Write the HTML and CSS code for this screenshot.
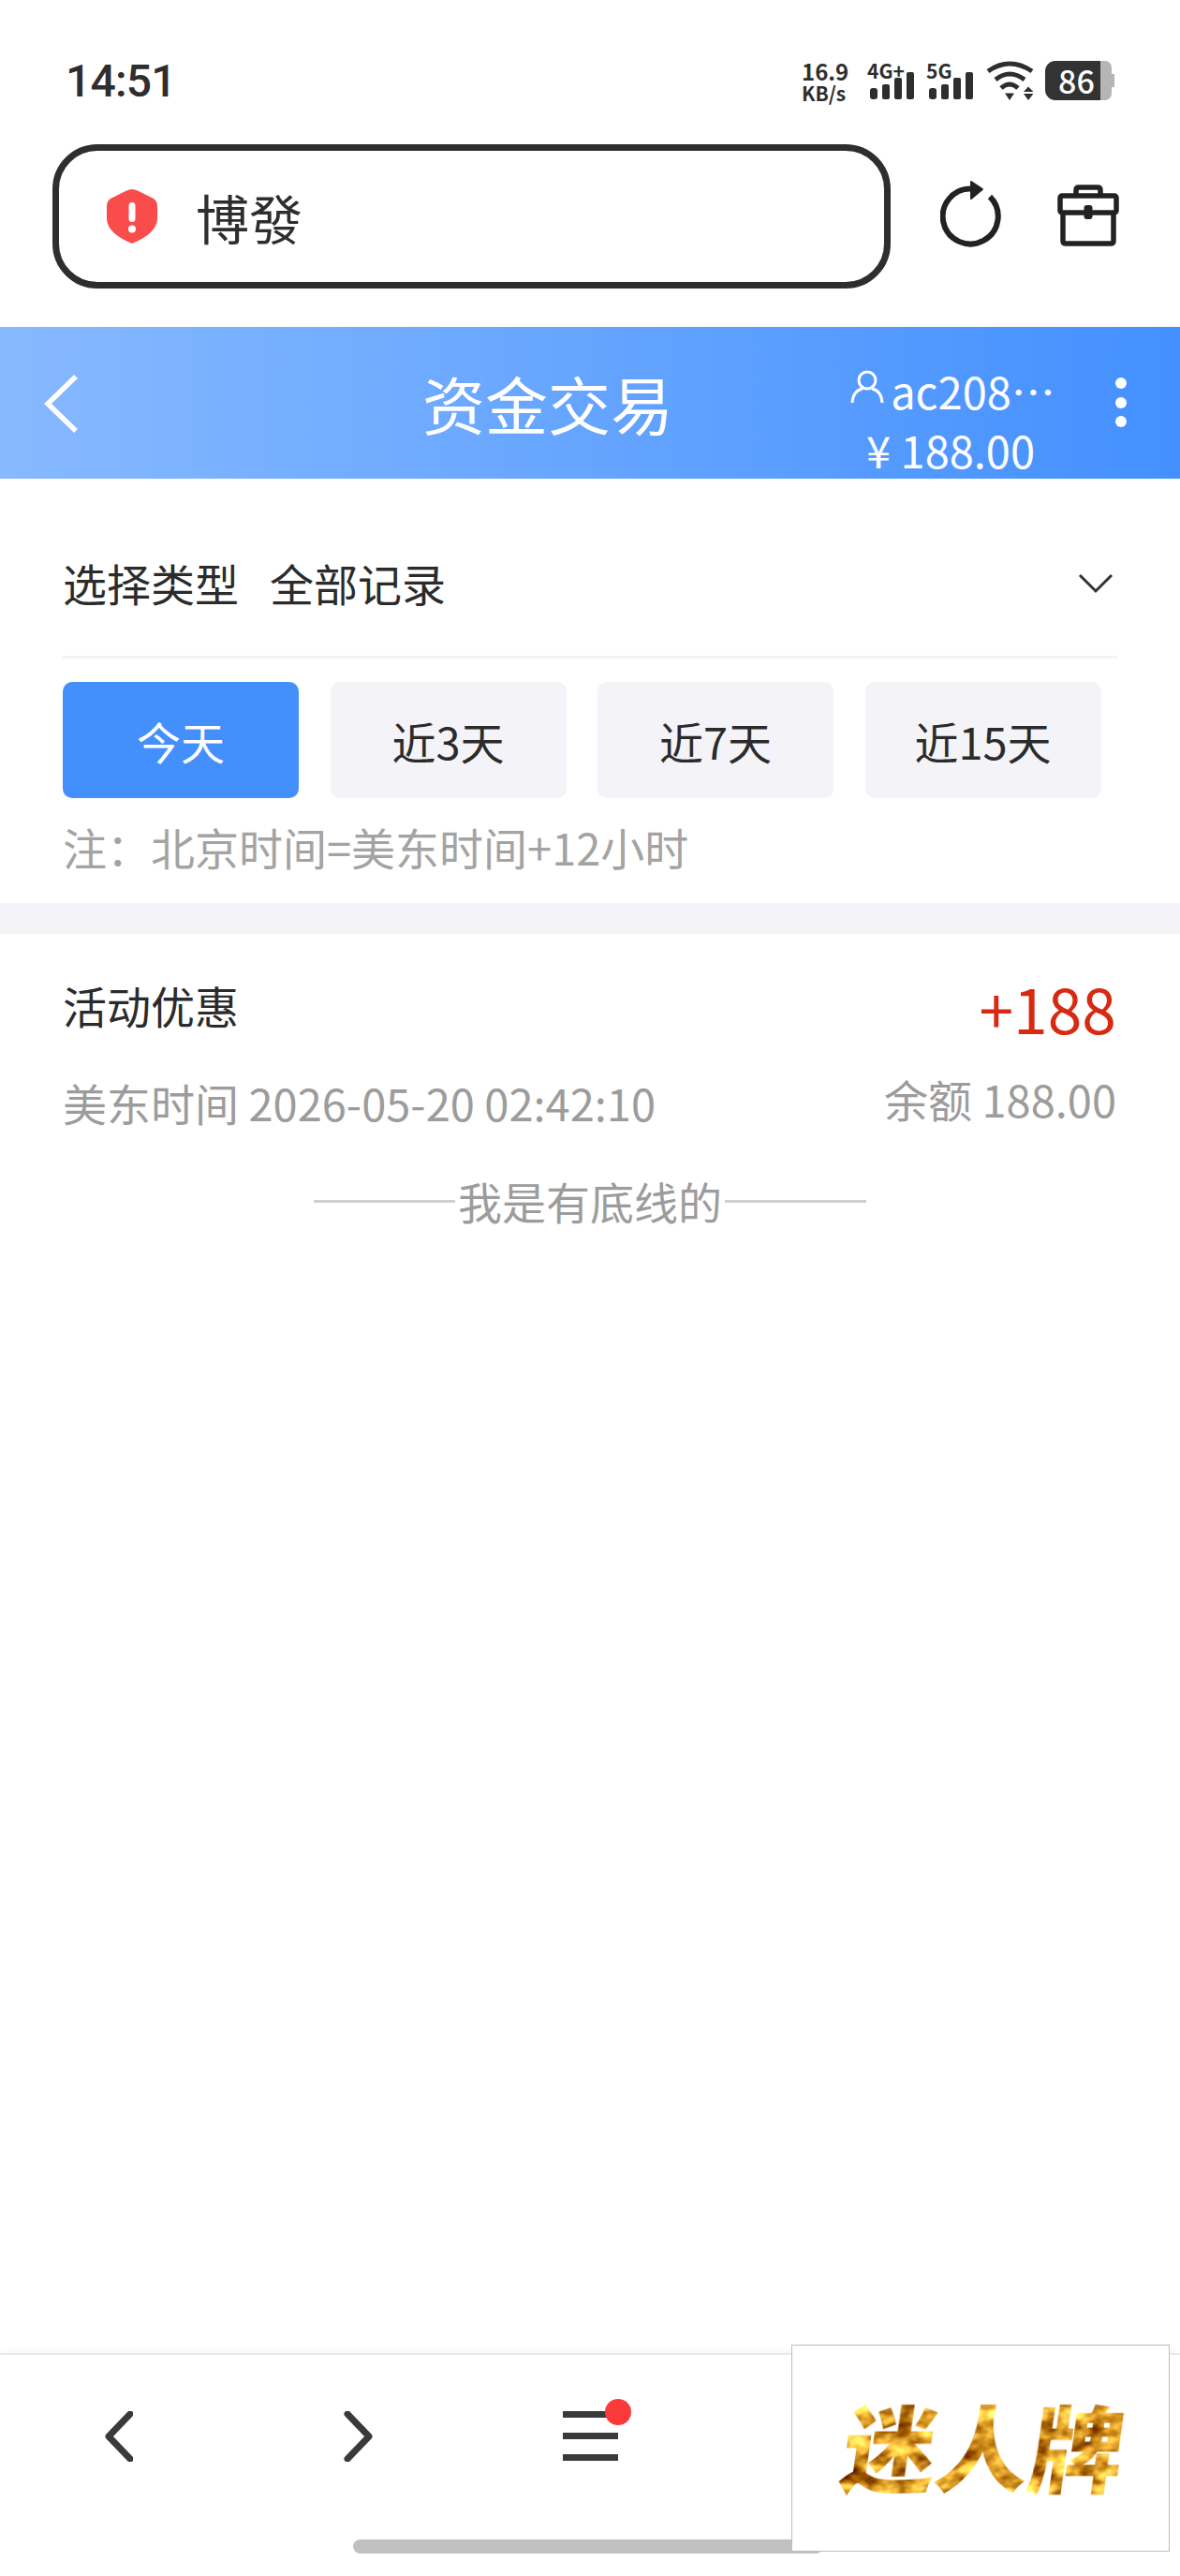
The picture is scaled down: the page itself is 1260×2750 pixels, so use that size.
FILE: index.html
```html
<!DOCTYPE html>
<html lang="zh-CN">
<head>
    <meta charset="UTF-8">
    <meta name="viewport" content="width=device-width, initial-scale=1.0">
    <title>资金交易</title>
    <link rel="stylesheet" href="styles.css">
</head>
<body>
    <div class="page">
        <!-- phone status bar -->
        <div class="statusbar">
            <span class="clock">14:51</span>
            <div class="status-icons">
                <div class="speed"><span class="speed-num">16.9</span><span class="speed-unit">KB/s</span></div>
                <div class="signal signal-4g">
                    <span class="net">4G+</span>
                    <svg width="50" height="30" viewBox="0 0 50 30"><g fill="#2e2e2e"><rect x="2" y="17" width="8" height="12" rx="3"/><rect x="15" y="13" width="8" height="16" rx="2"/><rect x="28" y="6" width="8" height="23" rx="2"/><rect x="41" y="0" width="8" height="29" rx="2"/></g></svg>
                </div>
                <div class="signal signal-5g">
                    <span class="net">5G</span>
                    <svg width="50" height="30" viewBox="0 0 50 30"><g fill="#2e2e2e"><rect x="2" y="17" width="8" height="12" rx="3"/><rect x="15" y="13" width="8" height="16" rx="2"/><rect x="28" y="6" width="8" height="23" rx="2"/><rect x="41" y="0" width="8" height="29" rx="2"/></g></svg>
                </div>
                <svg class="wifi" width="52" height="42" viewBox="0 0 52 42">
                    <g fill="none" stroke="#2e2e2e" stroke-width="5">
                        <path d="M2 11Q25-5 49 11"/>
                        <path d="M10 20Q25 8 41 20"/>
                        <path d="M16 29Q25 21 34 29"/>
                    </g>
                    <path d="M20 34.500H30L25 42Z M40 33L45 27.500L50.500 33Z M40 35H50.500L45 42Z" fill="#2e2e2e"/>
                </svg>
                <div class="battery">
                    <span class="battery-level">86</span>
                    <span class="battery-rest"></span>
                    <span class="battery-cap"></span>
                </div>
            </div>
        </div>

        <!-- browser address row -->
        <div class="addr-row">
            <div class="addr-box">
                <svg class="shield" width="54" height="58" viewBox="0 0 54 58">
                    <path d="M27 0Q31 0 35 2.500L49 9.500Q54 12 54 18V31Q54 47 27 58Q0 47 0 31V18Q0 12 5 9.500L19 2.500Q23 0 27 0Z" fill="#fb4c4c"/>
                    <rect x="23.500" y="14" width="7" height="21" rx="3.500" fill="#fff"/>
                    <circle cx="27" cy="42.500" r="4" fill="#fff"/>
                </svg>
                <span class="addr-text">博發</span>
            </div>
            <svg class="reload" width="66" height="72" viewBox="0 0 66 72">
                <path d="M53 17A29.500 29.500 0 1 1 34 8.500" fill="none" stroke="#222" stroke-width="6"/>
                <path d="M33 1L45 9L33 19Z" fill="#222" stroke="#222" stroke-width="2" stroke-linejoin="round"/>
            </svg>
            <svg class="toolbox" width="66" height="66" viewBox="0 0 66 66">
                <g fill="none" stroke="#222" stroke-width="5.500" stroke-linejoin="round">
                    <path d="M20 12V6Q20 3 23 3H43Q46 3 46 6V12"/>
                    <rect x="3" y="12" width="60" height="18" rx="2"/>
                    <path d="M6 30V60Q6 63 9 63H57Q60 63 60 60V30"/>
                </g>
                <rect x="28.500" y="22" width="9" height="15" rx="3" fill="#222"/>
            </svg>
        </div>

        <!-- app header -->
        <header class="app-header">
            <svg class="back" width="36" height="62" viewBox="0 0 36 62"><path d="M34 2L4 31L34 60" fill="none" stroke="#fff" stroke-width="5.500"/></svg>
            <h1 class="title">资金交易</h1>
            <div class="account">
                <div class="account-name">
                    <svg width="36" height="36" viewBox="0 0 36 36"><g fill="none" stroke="#fff" stroke-width="3"><circle cx="18" cy="11" r="9"/><path d="M2 35Q3 22 13 20M34 35Q33 22 23 20"/></g></svg>
                    <span>ac208…</span>
                </div>
                <div class="account-money">¥ 188.00</div>
            </div>
            <div class="more"><i></i><i></i><i></i></div>
        </header>

        <main class="content">
            <div class="filter">
                <div class="select-row">
                    <span class="select-label">选择类型</span>
                    <span class="select-value">全部记录</span>
                    <svg class="select-arrow" width="38" height="22" viewBox="0 0 38 22"><path d="M2 2L19 19L36 2" fill="none" stroke="#333" stroke-width="3"/></svg>
                </div>
                <div class="days">
                    <button class="day active">今天</button>
                    <button class="day">近3天</button>
                    <button class="day">近7天</button>
                    <button class="day">近15天</button>
                </div>
                <p class="note">注：北京时间=美东时间+12小时</p>
            </div>

            <div class="band"></div>

            <div class="record">
                <div class="record-top">
                    <span class="record-name">活动优惠</span>
                    <span class="record-amount">+188</span>
                </div>
                <div class="record-bottom">
                    <span class="record-time">美东时间 2026-05-20 02:42:10</span>
                    <span class="record-balance">余额 188.00</span>
                </div>
            </div>

            <div class="the-end"><i></i><span>我是有底线的</span><i></i></div>
        </main>

        <!-- browser bottom bar -->
        <footer class="bottom-bar">
            <div class="nav-item">
                <svg width="32" height="54" viewBox="0 0 32 54"><path d="M28 3L5 27L28 51" fill="none" stroke="#3a3a3a" stroke-width="7" stroke-linejoin="round" stroke-linecap="round" transform="translate(1 0)"/></svg>
            </div>
            <div class="nav-item nav-forward">
                <svg width="32" height="54" viewBox="0 0 32 54"><path d="M4 3L27 27L4 51" fill="none" stroke="#3a3a3a" stroke-width="7" stroke-linejoin="round" stroke-linecap="round"/></svg>
            </div>
            <div class="nav-item">
                <div class="menu"><i></i><i></i><i></i><b class="menu-dot"></b></div>
            </div>
            <div class="home-pill"></div>
            <div class="float-ad">
                <svg width="404" height="220" viewBox="0 0 404 220">
                    <defs>
                        <filter id="gold" x="0" y="0" width="100%" height="100%" color-interpolation-filters="sRGB">
                            <feTurbulence type="fractalNoise" baseFrequency="0.04 0.06" numOctaves="3" seed="7" result="noise"/>
                            <feColorMatrix in="noise" type="matrix" values="1.4 0 0 0 0.15  1.5 0 0 0 -0.15  1 0 0 0 -0.35  0 0 0 0 1" result="tone"/>
                            <feComposite in="tone" in2="SourceAlpha" operator="in"/>
                        </filter>
                    </defs>
                    <text class="ad-text" x="0" y="0" transform="translate(50 150) skewX(-8)" filter="url(#gold)">迷人牌</text>
                </svg>
            </div>
        </footer>
    </div>
</body>
</html>
```

FILE: styles.css
```css
* {
    box-sizing: border-box;
}
body {
    margin: 0;
    background: #fff;
    font-family: "Noto Sans CJK SC", "Noto Sans", sans-serif;
    color: #333;
}
.page {
    width: 1260px;
    height: 2750px;
    display: flex;
    flex-direction: column;
    overflow: hidden;
}

/* status bar */
.statusbar {
    height: 154px;
    flex: none;
    padding: 65px 70px 0 70px;
    display: flex;
    justify-content: space-between;
    align-items: flex-start;
}
.clock {
    font-family: Roboto, sans-serif;
    font-weight: 500;
    font-size: 48px;
    line-height: 44px;
    letter-spacing: -0.8px;
    color: #2e2e2e;
}
.status-icons {
    display: flex;
    align-items: flex-start;
    height: 42px;
}
.speed {
    width: 58px;
    margin-top: -2px;
    display: flex;
    flex-direction: column;
    font-weight: 700;
    color: #2e2e2e;
}
.speed-num {
    font-size: 24px;
    line-height: 25px;
}
.speed-unit {
    font-size: 21px;
    line-height: 22px;
}
.signal {
    width: 63px;
    position: relative;
    height: 42px;
    display: flex;
    flex-direction: column;
    align-items: flex-end;
    justify-content: flex-end;
}
.signal .net {
    position: absolute;
    left: 12px;
    top: 0;
    font-weight: 700;
    font-size: 21px;
    line-height: 20px;
    color: #2e2e2e;
}
.signal-5g {
    margin-right: 13px;
}
.wifi {
    flex: none;
    margin-right: 11px;
}
.battery {
    display: flex;
    height: 42px;
    align-items: center;
}
.battery-level {
    width: 59px;
    height: 42px;
    padding-left: 8px;
    background: #333;
    border-radius: 11px 0 0 11px;
    color: #fff;
    font-size: 34px;
    font-weight: 500;
    line-height: 42px;
    text-align: center;
}
.battery-rest {
    width: 12px;
    height: 42px;
    background: #b5b5b5;
    border-radius: 0 7px 7px 0;
}
.battery-cap {
    width: 3px;
    height: 14px;
    background: #b5b5b5;
}

/* address row */
.addr-row {
    height: 195px;
    flex: none;
    padding-left: 56px;
    display: flex;
    align-items: flex-start;
}
.addr-box {
    width: 895px;
    height: 154px;
    border: 7px solid #2e2e2e;
    border-radius: 48px;
    display: flex;
    align-items: center;
    padding-left: 51px;
}
.addr-text {
    margin-left: 41px;
    font-size: 57px;
    line-height: 66px;
    color: #2e2e2e;
}
.reload {
    margin-left: 53px;
    margin-top: 39px;
}
.toolbox {
    margin-left: 59px;
    margin-top: 43px;
}

/* app header */
.app-header {
    height: 162px;
    flex: none;
    display: flex;
    align-items: flex-start;
    background: linear-gradient(90deg, #87b9ff 0%, #4390ff 100%);
    color: #fff;
}
.back {
    flex: none;
    margin: 51px 0 0 47px;
}
.title {
    margin: 36px 0 0 368px;
    font-size: 67px;
    font-weight: 400;
    line-height: 90px;
    white-space: nowrap;
}
.account {
    flex: none;
    width: 270px;
    margin: 36px 0 0 161px;
    text-align: center;
    font-size: 47px;
    line-height: 63px;
}
.account-name {
    display: flex;
    align-items: flex-start;
    justify-content: center;
    gap: 7px;
    padding-left: 5px;
}
.account-name svg {
    flex: none;
    margin-top: 10px;
}
.more {
    flex: none;
    margin: 54px 0 0 41px;
    display: flex;
    flex-direction: column;
    gap: 8.500px;
}
.more i {
    display: block;
    width: 12px;
    height: 12px;
    border-radius: 50%;
    background: #fff;
}

/* filter */
.content {
    flex: 1;
}
.filter {
    padding: 0 67px 27px;
}
.select-row {
    display: flex;
    align-items: center;
    height: 192px;
    padding-top: 31px;
    border-bottom: 3px solid #f4f4f7;
    font-size: 47px;
    color: #2b2b2b;
}
.select-value {
    margin-left: 33px;
}
.select-arrow {
    margin-left: auto;
    margin-right: 4px;
    margin-top: 4px;
}
.days {
    display: flex;
    gap: 33.500px;
    margin-top: 25px;
}
.day {
    width: 252px;
    height: 124px;
    border: none;
    border-radius: 10px;
    background: #f4f4f8;
    color: #2b2b2b;
    font-family: inherit;
    font-size: 47px;
    padding: 0;
}
.day.active {
    background: #4390fd;
    color: #fff;
}
.note {
    margin: 19px 0 0;
    font-size: 47px;
    line-height: 66px;
    color: #a3a3a3;
}
.band {
    height: 33px;
    background: #f4f4f8;
}

/* record */
.record {
    padding: 43px 68px 0 67px;
}
.record-top,
.record-bottom {
    display: flex;
    justify-content: space-between;
    align-items: flex-start;
}
.record-name {
    font-size: 47px;
    line-height: 66px;
    color: #2b2b2b;
}
.record-amount {
    font-size: 66px;
    line-height: 66px;
    margin-top: 2px;
    color: #d82a10;
}
.record-bottom {
    margin-top: 36px;
    font-size: 47px;
    line-height: 66px;
    color: #9c9c9c;
}
.record-balance {
    margin-top: -4px;
}
.the-end {
    margin-top: 39px;
    display: flex;
    justify-content: center;
    align-items: center;
    gap: 3px;
    font-size: 47px;
    line-height: 66px;
    color: #9c9c9c;
}
.the-end i {
    display: block;
    width: 151px;
    height: 3px;
    background: #cfcfcf;
}

/* bottom bar */
.bottom-bar {
    position: relative;
    height: 238px;
    flex: none;
    display: flex;
    align-items: flex-start;
    padding-top: 60px;
    border-top: 2px solid #e9e9e9;
    box-shadow: 0 -3px 6px rgba(0, 0, 0, 0.03);
}
.nav-item {
    width: 252px;
    display: flex;
    justify-content: center;
}
.nav-forward svg {
    margin-left: 9px;
}
.menu {
    position: relative;
    width: 59px;
    display: flex;
    flex-direction: column;
    gap: 16px;
}
.menu i {
    display: block;
    height: 7px;
    background: #3a3a3a;
}
.menu-dot {
    position: absolute;
    left: 45px;
    top: -13px;
    width: 28px;
    height: 28px;
    border-radius: 50%;
    background: #fb3a3a;
}
.home-pill {
    position: absolute;
    left: 377px;
    top: 197px;
    width: 502px;
    height: 15px;
    border-radius: 8px;
    background: #c1c1c1;
}
.float-ad {
    position: absolute;
    left: 845px;
    top: -11px;
    width: 404px;
    height: 221px;
    background: #fff;
    border: 1px solid #bdbdbd;
}
.float-ad svg {
    display: block;
    margin: -1px;
}
.ad-text {
    font-family: "Noto Sans CJK SC", sans-serif;
    font-weight: 900;
    font-size: 100px;
    fill: #b8860b;
}
```
